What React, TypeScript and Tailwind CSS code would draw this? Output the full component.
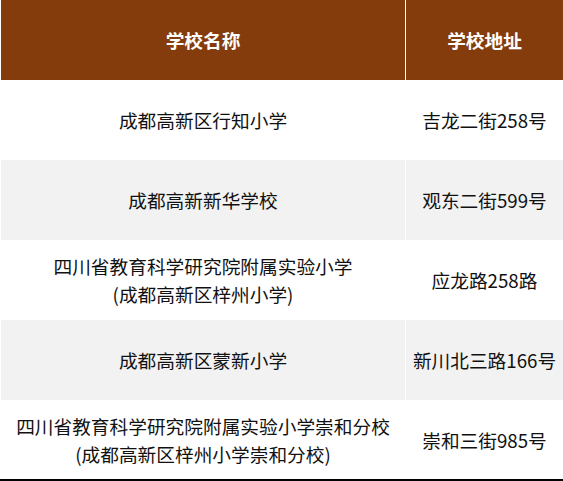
import React from 'react';

const rows = [
  { name: ['成都高新区行知小学'], addr: '吉龙二街258号' },
  { name: ['成都高新新华学校'], addr: '观东二街599号' },
  { name: ['四川省教育科学研究院附属实验小学', '(成都高新区梓州小学)'], addr: '应龙路258路' },
  { name: ['成都高新区蒙新小学'], addr: '新川北三路166号' },
  { name: ['四川省教育科学研究院附属实验小学崇和分校', '(成都高新区梓州小学崇和分校)'], addr: '崇和三街985号' },
];

export default function App() {
  return (
    <div
      className="w-[563px] bg-white text-[18.7px] leading-[28px] text-[#111]"
      style={{ fontFamily: '"Microsoft YaHei", "Noto Sans CJK SC", "Noto Sans", sans-serif' }}
    >
      {/* Header */}
      <div className="flex h-[80px] gap-px pl-px">
        <div className="flex w-[404px] items-center justify-center bg-[#843c0c] font-bold text-white">
          学校名称
        </div>
        <div className="flex flex-1 items-center justify-center bg-[#843c0c] font-bold text-white">
          学校地址
        </div>
      </div>

      {rows.map((r, i) => {
        const bg = i % 2 === 1 ? 'bg-[#f2f2f2]' : 'bg-white';
        const h = i === rows.length - 1 ? 'h-[79px]' : 'h-[80px]';
        return (
          <div key={i} className={`flex gap-px pl-px ${h}`}>
            <div className={`flex w-[404px] flex-col items-center justify-center text-center ${bg}`}>
              {r.name.map((line, j) => (
                <div key={j}>{line}</div>
              ))}
            </div>
            <div className={`flex flex-1 items-center justify-center ${bg}`}>{r.addr}</div>
          </div>
        );
      })}

      <div className="h-[2px] bg-black" />
    </div>
  );
}
